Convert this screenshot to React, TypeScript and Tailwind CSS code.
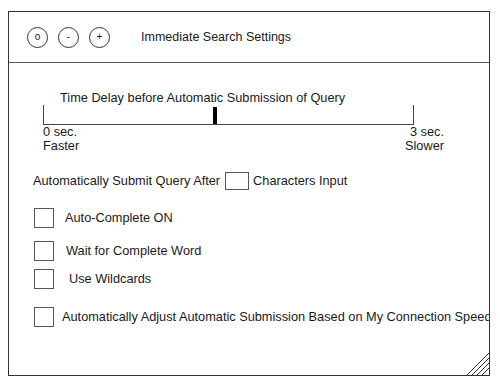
const Circle = ({ glyph }: { glyph: string }) => (
  <div className="w-[21px] h-[21px] rounded-full border border-[#333] flex items-center justify-center text-[10px] leading-none">
    {glyph}
  </div>
);

const Check = ({ label, className, gap }: { label: string; className: string; gap: string }) => (
  <div className={`flex items-center ${className}`}>
    <div className="w-[20px] h-[20px] border border-[#555] shrink-0" />
    <span className={gap}>{label}</span>
  </div>
);

const App = () => {
  return (
    <div className="w-[500px] h-[386px] bg-white pl-[8px] pt-[11px] font-['Liberation_Sans',Arial,sans-serif] text-[12.75px] leading-[14px] text-[#1a1a1a]">
      <div className="relative w-[482px] h-[365px] border border-[#333] flex flex-col overflow-hidden">
        {/* title bar */}
        <div className="h-[51px] shrink-0 border-b border-[#555] flex items-center pl-[18px]">
          <div className="flex gap-[10px]">
            <Circle glyph="o" />
            <Circle glyph="-" />
            <Circle glyph="+" />
          </div>
          <span className="ml-[31px] text-[12.5px]">Immediate Search Settings</span>
        </div>

        {/* slider */}
        <div className="mt-[28px] pl-[51px]">Time Delay before Automatic Submission of Query</div>
        <div className="relative ml-[34px] w-[371px] h-[20px] border-l border-r border-b border-[#444]">
          <div className="absolute left-[169px] bottom-0 w-[4px] h-[17px] bg-black" />
        </div>
        <div className="ml-[34px] w-[401px] flex justify-between">
          <div>
            <div>0 sec.</div>
            <div>Faster</div>
          </div>
          <div className="text-right">
            <div>3 sec.</div>
            <div>Slower</div>
          </div>
        </div>

        <div className="mt-[19px] ml-[24px] flex items-center">
          <span>Automatically Submit Query After</span>
          <div className="w-[24px] h-[18px] border border-[#555] ml-[5px] mr-[4px]" />
          <span>Characters Input</span>
        </div>

        <Check label="Auto-Complete ON" className="mt-[18px] ml-[25px]" gap="ml-[11px]" />
        <Check label="Wait for Complete Word" className="mt-[13px] ml-[25px]" gap="ml-[12px]" />
        <Check label="Use Wildcards" className="mt-[8px] ml-[25px]" gap="ml-[15px]" />
        <Check
          label="Automatically Adjust Automatic Submission Based on My Connection Speed"
          className="mt-[18px] ml-[25px] whitespace-nowrap"
          gap="ml-[8px]"
        />

        {/* resize grip */}
        <svg className="absolute right-0 bottom-0" width="22" height="22" viewBox="0 0 22 22">
          <g stroke="#333" strokeWidth="1">
            <line x1="0" y1="22" x2="22" y2="0" />
            <line x1="5" y1="22" x2="22" y2="5" />
            <line x1="10" y1="22" x2="22" y2="10" />
            <line x1="15" y1="22" x2="22" y2="15" />
          </g>
        </svg>
      </div>
    </div>
  );
};

export default App;
